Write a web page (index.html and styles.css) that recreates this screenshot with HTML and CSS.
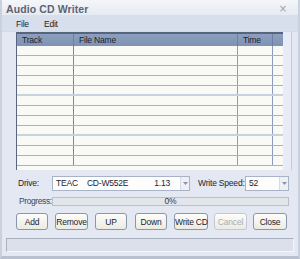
FILE: index.html
```html
<!DOCTYPE html>
<html>
<head>
<meta charset="utf-8">
<link rel="stylesheet" href="styles.css">
</head>
<body>
<div class="window">
  <div class="titlebar">
    <span class="title">Audio CD Writer</span>
    <span class="close">×</span>
  </div>
  <div class="menubar">
    <span class="menu">File</span>
    <span class="menu">Edit</span>
  </div>
  <div class="content">
    <div class="tablewrap">
      <div class="table">
        <div class="thead">
          <div class="c1">Track</div>
          <div class="c2">File Name</div>
          <div class="c3">Time</div>
          <div class="c4"></div>
        </div>
        <div class="tbody">
          <div class="row"><div class="c1"></div><div class="c2"></div><div class="c3"></div><div class="c4"></div></div>
          <div class="row"><div class="c1"></div><div class="c2"></div><div class="c3"></div><div class="c4"></div></div>
          <div class="row"><div class="c1"></div><div class="c2"></div><div class="c3"></div><div class="c4"></div></div>
          <div class="row"><div class="c1"></div><div class="c2"></div><div class="c3"></div><div class="c4"></div></div>
          <div class="row"><div class="c1"></div><div class="c2"></div><div class="c3"></div><div class="c4"></div></div>
          <div class="row"><div class="c1"></div><div class="c2"></div><div class="c3"></div><div class="c4"></div></div>
          <div class="row"><div class="c1"></div><div class="c2"></div><div class="c3"></div><div class="c4"></div></div>
          <div class="row"><div class="c1"></div><div class="c2"></div><div class="c3"></div><div class="c4"></div></div>
          <div class="row"><div class="c1"></div><div class="c2"></div><div class="c3"></div><div class="c4"></div></div>
          <div class="row"><div class="c1"></div><div class="c2"></div><div class="c3"></div><div class="c4"></div></div>
          <div class="row"><div class="c1"></div><div class="c2"></div><div class="c3"></div><div class="c4"></div></div>
          <div class="row"><div class="c1"></div><div class="c2"></div><div class="c3"></div><div class="c4"></div></div>
        </div>
      </div>
      <div class="vstrip"></div>
    </div>
    <div class="driverow">
      <span class="label drive-label">Drive:</span>
      <div class="combo drive-combo">
        <span class="combo-text"><span>TEAC</span><span class="model">CD-W552E</span><span class="ver">1.13</span></span>
        <span class="arrow"><svg width="5" height="3" viewBox="0 0 5 3"><path d="M0 0h5L2.5 3z" fill="#8a94a8"/></svg></span>
      </div>
      <span class="label speed-label">Write Speed:</span>
      <div class="combo speed-combo">
        <span class="combo-text">52</span>
        <span class="arrow"><svg width="5" height="3" viewBox="0 0 5 3"><path d="M0 0h5L2.5 3z" fill="#8a94a8"/></svg></span>
      </div>
    </div>
    <div class="progrow">
      <span class="label prog-label">Progress:</span>
      <div class="progress">0%</div>
    </div>
    <div class="buttons">
      <button class="btn b-add">Add</button>
      <button class="btn b-remove">Remove</button>
      <button class="btn b-up">UP</button>
      <button class="btn b-down">Down</button>
      <button class="btn b-write">Write CD</button>
      <button class="btn b-cancel" disabled>Cancel</button>
      <button class="btn b-close">Close</button>
    </div>
  </div>
  <div class="statusbar"></div>
</div>
</body>
</html>
```
FILE: styles.css
```css
* { box-sizing: border-box; }
html, body { margin: 0; padding: 0; }
body {
  width: 300px; height: 259px; overflow: hidden;
  font-family: "Liberation Sans", sans-serif;
  font-size: 8.5px; color: #1c2430; letter-spacing: -0.2px;
  background: #ffffff;
}
.window {
  width: 300px; height: 259px;
  background: #e3e8f2;
  border-left: 2px solid #c9d0de;
  border-right: 2px solid #c9d0de;
  border-bottom: 3px solid #b9c1d1;
  display: flex; flex-direction: column;
}
.titlebar {
  height: 15px; flex: none;
  background: linear-gradient(#f4f6fa, #e6eaf2);
  display: flex; align-items: center; justify-content: space-between;
  padding: 0 11px 0 4px;
}
.title {
  font-family: "Liberation Sans", sans-serif;
  font-weight: bold; font-size: 10.5px; color: #5d6474;
  letter-spacing: 0.1px; margin-top: 2px;
}
.close { font-family: "DejaVu Sans", sans-serif; font-size: 10px; color: #98a0b0; margin-top: 1px; }
.menubar {
  height: 17px; flex: none;
  background: #d7deec;
  display: flex; align-items: center;
  padding: 1px 0 0 14px; gap: 15px;
  border-bottom: 1px solid #d3dae8;
}
.content {
  flex: 1;
  padding: 0 6px 0 14px;
  display: flex; flex-direction: column;
}
.tablewrap { display: flex; height: 138px; flex: none; }
.table {
  width: 269px; height: 138px;
  background: #f9f9f6;
  border-left: 1px solid #5a6680;
  overflow: hidden;
}
.vstrip { width: 9px; background: #e8ebf8; border-right: 1px solid #c4cbdb; }
.thead {
  display: flex; height: 14px;
  background: linear-gradient(#8d9fbe, #7f92b4);
  border-top: 2px solid #56647e;
  color: #1c2430;
}
.thead > div { padding-left: 5px; line-height: 12px; border-right: 1px solid #6e7fa0; }
.c1 { width: 57px; flex: none; }
.c2 { width: 164px; flex: none; }
.c3 { width: 35px; flex: none; }
.c4 { flex: 1; border-right: none !important; }
.row { display: flex; height: 10px; border-bottom: 1px solid #a3b1d3; }
.row:nth-child(4n+5) { border-bottom: 2px solid #c9d1dc; }
.row > div { border-right: 1px solid #8d9cbc; height: 100%; }
.row > .c1 { border-right-color: #7a88a8; }
.driverow {
  display: flex; align-items: center; height: 18px; margin-top: 4px; flex: none;
  white-space: nowrap;
}
.label { color: #1c2430; white-space: nowrap; }
.drive-label { width: 34px; margin-left: 2px; flex: none; }
.combo {
  height: 15px; background: #fdfdfd; flex: none;
  border: 1px solid #a9b3c6;
  display: flex; align-items: center; justify-content: space-between;
}
.combo-text { padding-left: 3px; white-space: nowrap; display: flex; }
.model { margin-left: 9px; }
.ver { margin-left: 26px; }
.arrow {
  width: 9px; height: 13px; display: flex; align-items: center; justify-content: center;
  background: #eef0f5; border-left: 1px solid #d5dae4;
}
.drive-combo { width: 138px; }
.speed-label { margin-left: 8px; width: 47px; flex: none; }
.speed-combo { width: 44px; }
.progrow { display: flex; align-items: center; height: 12px; margin-top: 3px; flex: none; }
.prog-label { width: 33px; margin-left: 3px; color: #404858; flex: none; letter-spacing: -0.4px; }
.progress {
  width: 237px; height: 9px; flex: none;
  background: #e2e5ea; border: 1px solid #b8c0cc;
  line-height: 7px; text-align: center; color: #303848;
}
.buttons { display: flex; margin-top: 6px; height: 17px; flex: none; }
.btn {
  height: 17px; padding: 0; flex: none;
  font-family: "Liberation Sans", sans-serif; font-size: 8.5px; color: #1c2430; letter-spacing: -0.2px;
  background: linear-gradient(#fdfdf9, #ecebe2);
  border: 1px solid #8a96ac; border-radius: 3px;
  margin-right: 7px; white-space: nowrap;
}
.b-add { width: 32px; }
.b-remove { width: 33px; }
.b-up { width: 32px; margin-right: 8px; }
.b-down { width: 32px; }
.b-write { width: 34px; margin-right: 6px; }
.b-cancel { width: 33px; color: #a8adb6; border-color: #c3c9d4; margin-right: 6px; }
.b-close { width: 34px; }
.statusbar {
  height: 14px; margin: auto 4px 4px 4px;
  background: #dbe0ea;
  border-top: 1px solid #a8b0c0; border-left: 1px solid #a8b0c0;
  border-bottom: 1px solid #f4f6fa; border-right: 1px solid #f4f6fa;
}
```
